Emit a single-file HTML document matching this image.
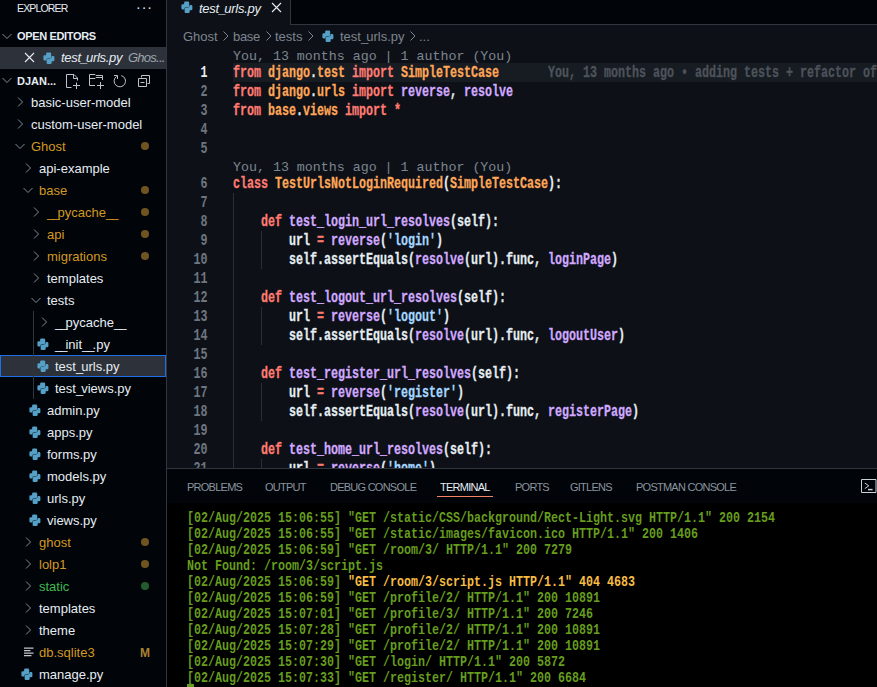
<!DOCTYPE html><html><head><meta charset="utf-8"><style>
*{margin:0;padding:0;box-sizing:border-box}
html,body{width:877px;height:687px;overflow:hidden;background:#010409}
body{position:relative;font-family:"Liberation Sans",sans-serif;font-size:13px}
.t{position:absolute;white-space:pre;line-height:16px}
.b{font-weight:bold}
.u{letter-spacing:-2px}
.i{font-style:italic}
.ic{position:absolute;display:block}
#sb{position:absolute;left:0;top:0;width:166px;height:687px;background:#010409;overflow:hidden}
.sel0{position:absolute;left:0;width:166px;height:22px;background:#2d323a}
.sel1{position:absolute;left:0;width:166px;height:22px;background:#2d323a;border:1px solid #1f6feb}
.dot{position:absolute;left:141px;width:8px;height:8px;border-radius:50%}
#ed{position:absolute;left:167px;top:0;width:710px;height:468px;background:#0d1117;overflow:hidden}
#tabs{position:absolute;left:0;top:0;width:710px;height:25px;background:#010409;border-bottom:1px solid #30363d}
#tab{position:absolute;left:0;top:0;width:124px;height:25px;background:#0d1117;border-right:1px solid #30363d}
#code{position:absolute;left:0;top:0;width:710px;height:468px}
.ln{position:absolute;left:0;width:40.5px;text-align:right;font-family:"Liberation Mono",monospace;font-weight:bold;font-size:16px;line-height:19px;transform:scaleX(0.7292);transform-origin:40.5px 0}
.cl{position:absolute;white-space:pre;-webkit-text-stroke:0.3px currentColor;font-family:"Liberation Mono",monospace;font-weight:bold;font-size:16px;line-height:19px;transform:scaleX(0.7292);transform-origin:0 0;color:#e6edf3}
.lens{position:absolute;white-space:pre;font-family:"Liberation Mono",monospace;font-size:13.3px;line-height:16px;color:#7d8590}
.guide{position:absolute;width:1px;background:#2a2f36}
#panel{position:absolute;left:167px;top:468px;width:710px;height:219px;background:#010409}
.ptab{font-size:11px;letter-spacing:-0.75px}
#term{position:absolute;left:0;top:35px;width:710px;height:184px;background:#000}
.tl{position:absolute;white-space:pre;font-family:"Liberation Mono",monospace;font-weight:bold;font-size:15px;line-height:16px;transform:scaleX(0.7778);transform-origin:0 0}
</style></head><body><div id="sb">
<div class="t" style="left:17px;top:0px;font-size:10.5px;letter-spacing:-0.85px;color:#e6edf3">EXPLORER</div>
<div class="t" style="left:136px;top:-1px;font-size:14px;color:#e6edf3;letter-spacing:1px">···</div>
<svg class="ic" style="left:1px;top:31px;width:12px;height:10px" viewBox="0 0 12 10"><path d="M1.5 3l4.5 4.5 4.5-4.5" fill="none" stroke="#848d97" stroke-width="1"/></svg>
<div class="t b" style="left:17px;top:28px;font-size:11px;color:#e6edf3;letter-spacing:-0.35px">OPEN EDITORS</div>
<div class="sel0" style="top:47px"></div>
<svg class="ic" style="left:24px;top:52px;width:11px;height:11px" viewBox="0 0 11 11"><path d="M1 1l9 9M10 1l-9 9" stroke="#e6edf3" stroke-width="1.1"/></svg>
<svg class="ic" style="left:44px;top:52px;width:11px;height:12px;overflow:visible" viewBox="0.6 -0.5 11 12"><g fill="#55a0c6"><path d="M2.7 1.3Q2.7 0 4 0H6.5Q7.8 0 7.8 1.3V5.2L3.9 6Q2.8 6.2 2.8 7.2V8.1H1.3Q0 8.1 0 6.8V4Q0 2.7 1.3 2.7H2.7Z"/><path d="M8.3 10.2Q8.3 11.5 7 11.5H4.5Q3.2 11.5 3.2 10.2V6.6L7.1 5.8Q8.2 5.6 8.2 4.6V3.4H9.7Q11 3.4 11 4.7V7.5Q11 8.8 9.7 8.8H8.3Z"/></g></svg>
<div class="t i" style="left:61px;top:50px;color:#e6edf3;letter-spacing:-0.3px">test<span class="u">_</span>urls.py</div>
<div class="t i" style="left:128px;top:50px;color:#9da5ae;letter-spacing:-0.75px">Ghos...</div>
<svg class="ic" style="left:1px;top:75px;width:12px;height:10px" viewBox="0 0 12 10"><path d="M1.5 3l4.5 4.5 4.5-4.5" fill="none" stroke="#848d97" stroke-width="1"/></svg>
<div class="t b" style="left:17px;top:73px;font-size:11px;color:#e6edf3">DJAN...</div>
<svg class="ic" style="left:64px;top:72px;width:18px;height:18px" viewBox="0 0 18 18" fill="none" stroke="#bcc4cc" stroke-width="1"><path d="M2.5 2.5V15.5H7.5M2.5 2.5H10L13.5 6V8.5M9.5 2.5V6.5H13.5M12.5 10.5V17M9 13.5H16"/></svg>
<svg class="ic" style="left:88px;top:72px;width:18px;height:18px" viewBox="0 0 18 18" fill="none" stroke="#bcc4cc" stroke-width="1"><path d="M1.5 2.5V13.5H7M1.5 2.5H7L8 3.5H14.5V8M1.5 6.5H7L8 5.5H14.5M12.5 10V17M9 13.5H16"/></svg>
<svg class="ic" style="left:112px;top:73px;width:16px;height:16px" viewBox="0 0 16 16" fill="none" stroke="#bcc4cc" stroke-width="1"><path d="M9.3 2.6A5.7 5.7 0 1 1 4.6 3.4M2 2.5H5.5V6"/></svg>
<svg class="ic" style="left:136px;top:73px;width:16px;height:16px" viewBox="0 0 16 16" fill="none" stroke="#bcc4cc" stroke-width="1"><path d="M5.5 4.5v-2h8v8h-2M2.5 5.5h8v8h-8zM4.5 9.5h4"/></svg>
<svg class="ic" style="left:15px;top:96px;width:10px;height:12px" viewBox="0 0 10 12"><path d="M3 1.5l4.5 4.5-4.5 4.5" fill="none" stroke="#848d97" stroke-width="1"/></svg>
<div class="t" style="left:31px;top:95px;color:#e6edf3">basic-user-model</div>
<svg class="ic" style="left:15px;top:118px;width:10px;height:12px" viewBox="0 0 10 12"><path d="M3 1.5l4.5 4.5-4.5 4.5" fill="none" stroke="#848d97" stroke-width="1"/></svg>
<div class="t" style="left:31px;top:117px;color:#e6edf3">custom-user-model</div>
<svg class="ic" style="left:14px;top:141px;width:12px;height:10px" viewBox="0 0 12 10"><path d="M1.5 3l4.5 4.5 4.5-4.5" fill="none" stroke="#848d97" stroke-width="1"/></svg>
<div class="t" style="left:31px;top:139px;color:#d29922">Ghost</div>
<div class="dot" style="top:142px;background:#6f5420"></div>
<svg class="ic" style="left:23px;top:162px;width:10px;height:12px" viewBox="0 0 10 12"><path d="M3 1.5l4.5 4.5-4.5 4.5" fill="none" stroke="#848d97" stroke-width="1"/></svg>
<div class="t" style="left:39px;top:161px;color:#e6edf3">api-example</div>
<svg class="ic" style="left:22px;top:185px;width:12px;height:10px" viewBox="0 0 12 10"><path d="M1.5 3l4.5 4.5 4.5-4.5" fill="none" stroke="#848d97" stroke-width="1"/></svg>
<div class="t" style="left:39px;top:183px;color:#d29922">base</div>
<div class="dot" style="top:186px;background:#6f5420"></div>
<svg class="ic" style="left:31px;top:206px;width:10px;height:12px" viewBox="0 0 10 12"><path d="M3 1.5l4.5 4.5-4.5 4.5" fill="none" stroke="#848d97" stroke-width="1"/></svg>
<div class="t" style="left:47px;top:205px;color:#d29922"><span class="u">_</span><span class="u">_</span>pycache<span class="u">_</span><span class="u">_</span></div>
<div class="dot" style="top:208px;background:#6f5420"></div>
<svg class="ic" style="left:31px;top:228px;width:10px;height:12px" viewBox="0 0 10 12"><path d="M3 1.5l4.5 4.5-4.5 4.5" fill="none" stroke="#848d97" stroke-width="1"/></svg>
<div class="t" style="left:47px;top:227px;color:#d29922">api</div>
<div class="dot" style="top:230px;background:#6f5420"></div>
<svg class="ic" style="left:31px;top:250px;width:10px;height:12px" viewBox="0 0 10 12"><path d="M3 1.5l4.5 4.5-4.5 4.5" fill="none" stroke="#848d97" stroke-width="1"/></svg>
<div class="t" style="left:47px;top:249px;color:#d29922">migrations</div>
<div class="dot" style="top:252px;background:#6f5420"></div>
<svg class="ic" style="left:31px;top:272px;width:10px;height:12px" viewBox="0 0 10 12"><path d="M3 1.5l4.5 4.5-4.5 4.5" fill="none" stroke="#848d97" stroke-width="1"/></svg>
<div class="t" style="left:47px;top:271px;color:#e6edf3">templates</div>
<svg class="ic" style="left:30px;top:295px;width:12px;height:10px" viewBox="0 0 12 10"><path d="M1.5 3l4.5 4.5 4.5-4.5" fill="none" stroke="#848d97" stroke-width="1"/></svg>
<div class="t" style="left:47px;top:293px;color:#e6edf3">tests</div>
<svg class="ic" style="left:39px;top:316px;width:10px;height:12px" viewBox="0 0 10 12"><path d="M3 1.5l4.5 4.5-4.5 4.5" fill="none" stroke="#848d97" stroke-width="1"/></svg>
<div class="t" style="left:55px;top:315px;color:#e6edf3"><span class="u">_</span><span class="u">_</span>pycache<span class="u">_</span><span class="u">_</span></div>
<svg class="ic" style="left:38px;top:338px;width:11px;height:12px;overflow:visible" viewBox="0.6 -0.5 11 12"><g fill="#55a0c6"><path d="M2.7 1.3Q2.7 0 4 0H6.5Q7.8 0 7.8 1.3V5.2L3.9 6Q2.8 6.2 2.8 7.2V8.1H1.3Q0 8.1 0 6.8V4Q0 2.7 1.3 2.7H2.7Z"/><path d="M8.3 10.2Q8.3 11.5 7 11.5H4.5Q3.2 11.5 3.2 10.2V6.6L7.1 5.8Q8.2 5.6 8.2 4.6V3.4H9.7Q11 3.4 11 4.7V7.5Q11 8.8 9.7 8.8H8.3Z"/></g></svg>
<div class="t" style="left:55px;top:337px;color:#e6edf3"><span class="u">_</span><span class="u">_</span>init<span class="u">_</span><span class="u">_</span>.py</div>
<div class="sel1" style="top:355px"></div>
<svg class="ic" style="left:38px;top:360px;width:11px;height:12px;overflow:visible" viewBox="0.6 -0.5 11 12"><g fill="#55a0c6"><path d="M2.7 1.3Q2.7 0 4 0H6.5Q7.8 0 7.8 1.3V5.2L3.9 6Q2.8 6.2 2.8 7.2V8.1H1.3Q0 8.1 0 6.8V4Q0 2.7 1.3 2.7H2.7Z"/><path d="M8.3 10.2Q8.3 11.5 7 11.5H4.5Q3.2 11.5 3.2 10.2V6.6L7.1 5.8Q8.2 5.6 8.2 4.6V3.4H9.7Q11 3.4 11 4.7V7.5Q11 8.8 9.7 8.8H8.3Z"/></g></svg>
<div class="t" style="left:55px;top:359px;color:#e6edf3">test<span class="u">_</span>urls.py</div>
<svg class="ic" style="left:38px;top:382px;width:11px;height:12px;overflow:visible" viewBox="0.6 -0.5 11 12"><g fill="#55a0c6"><path d="M2.7 1.3Q2.7 0 4 0H6.5Q7.8 0 7.8 1.3V5.2L3.9 6Q2.8 6.2 2.8 7.2V8.1H1.3Q0 8.1 0 6.8V4Q0 2.7 1.3 2.7H2.7Z"/><path d="M8.3 10.2Q8.3 11.5 7 11.5H4.5Q3.2 11.5 3.2 10.2V6.6L7.1 5.8Q8.2 5.6 8.2 4.6V3.4H9.7Q11 3.4 11 4.7V7.5Q11 8.8 9.7 8.8H8.3Z"/></g></svg>
<div class="t" style="left:55px;top:381px;color:#e6edf3">test<span class="u">_</span>views.py</div>
<svg class="ic" style="left:30px;top:404px;width:11px;height:12px;overflow:visible" viewBox="0.6 -0.5 11 12"><g fill="#55a0c6"><path d="M2.7 1.3Q2.7 0 4 0H6.5Q7.8 0 7.8 1.3V5.2L3.9 6Q2.8 6.2 2.8 7.2V8.1H1.3Q0 8.1 0 6.8V4Q0 2.7 1.3 2.7H2.7Z"/><path d="M8.3 10.2Q8.3 11.5 7 11.5H4.5Q3.2 11.5 3.2 10.2V6.6L7.1 5.8Q8.2 5.6 8.2 4.6V3.4H9.7Q11 3.4 11 4.7V7.5Q11 8.8 9.7 8.8H8.3Z"/></g></svg>
<div class="t" style="left:47px;top:403px;color:#e6edf3">admin.py</div>
<svg class="ic" style="left:30px;top:426px;width:11px;height:12px;overflow:visible" viewBox="0.6 -0.5 11 12"><g fill="#55a0c6"><path d="M2.7 1.3Q2.7 0 4 0H6.5Q7.8 0 7.8 1.3V5.2L3.9 6Q2.8 6.2 2.8 7.2V8.1H1.3Q0 8.1 0 6.8V4Q0 2.7 1.3 2.7H2.7Z"/><path d="M8.3 10.2Q8.3 11.5 7 11.5H4.5Q3.2 11.5 3.2 10.2V6.6L7.1 5.8Q8.2 5.6 8.2 4.6V3.4H9.7Q11 3.4 11 4.7V7.5Q11 8.8 9.7 8.8H8.3Z"/></g></svg>
<div class="t" style="left:47px;top:425px;color:#e6edf3">apps.py</div>
<svg class="ic" style="left:30px;top:448px;width:11px;height:12px;overflow:visible" viewBox="0.6 -0.5 11 12"><g fill="#55a0c6"><path d="M2.7 1.3Q2.7 0 4 0H6.5Q7.8 0 7.8 1.3V5.2L3.9 6Q2.8 6.2 2.8 7.2V8.1H1.3Q0 8.1 0 6.8V4Q0 2.7 1.3 2.7H2.7Z"/><path d="M8.3 10.2Q8.3 11.5 7 11.5H4.5Q3.2 11.5 3.2 10.2V6.6L7.1 5.8Q8.2 5.6 8.2 4.6V3.4H9.7Q11 3.4 11 4.7V7.5Q11 8.8 9.7 8.8H8.3Z"/></g></svg>
<div class="t" style="left:47px;top:447px;color:#e6edf3">forms.py</div>
<svg class="ic" style="left:30px;top:470px;width:11px;height:12px;overflow:visible" viewBox="0.6 -0.5 11 12"><g fill="#55a0c6"><path d="M2.7 1.3Q2.7 0 4 0H6.5Q7.8 0 7.8 1.3V5.2L3.9 6Q2.8 6.2 2.8 7.2V8.1H1.3Q0 8.1 0 6.8V4Q0 2.7 1.3 2.7H2.7Z"/><path d="M8.3 10.2Q8.3 11.5 7 11.5H4.5Q3.2 11.5 3.2 10.2V6.6L7.1 5.8Q8.2 5.6 8.2 4.6V3.4H9.7Q11 3.4 11 4.7V7.5Q11 8.8 9.7 8.8H8.3Z"/></g></svg>
<div class="t" style="left:47px;top:469px;color:#e6edf3">models.py</div>
<svg class="ic" style="left:30px;top:492px;width:11px;height:12px;overflow:visible" viewBox="0.6 -0.5 11 12"><g fill="#55a0c6"><path d="M2.7 1.3Q2.7 0 4 0H6.5Q7.8 0 7.8 1.3V5.2L3.9 6Q2.8 6.2 2.8 7.2V8.1H1.3Q0 8.1 0 6.8V4Q0 2.7 1.3 2.7H2.7Z"/><path d="M8.3 10.2Q8.3 11.5 7 11.5H4.5Q3.2 11.5 3.2 10.2V6.6L7.1 5.8Q8.2 5.6 8.2 4.6V3.4H9.7Q11 3.4 11 4.7V7.5Q11 8.8 9.7 8.8H8.3Z"/></g></svg>
<div class="t" style="left:47px;top:491px;color:#e6edf3">urls.py</div>
<svg class="ic" style="left:30px;top:514px;width:11px;height:12px;overflow:visible" viewBox="0.6 -0.5 11 12"><g fill="#55a0c6"><path d="M2.7 1.3Q2.7 0 4 0H6.5Q7.8 0 7.8 1.3V5.2L3.9 6Q2.8 6.2 2.8 7.2V8.1H1.3Q0 8.1 0 6.8V4Q0 2.7 1.3 2.7H2.7Z"/><path d="M8.3 10.2Q8.3 11.5 7 11.5H4.5Q3.2 11.5 3.2 10.2V6.6L7.1 5.8Q8.2 5.6 8.2 4.6V3.4H9.7Q11 3.4 11 4.7V7.5Q11 8.8 9.7 8.8H8.3Z"/></g></svg>
<div class="t" style="left:47px;top:513px;color:#e6edf3">views.py</div>
<svg class="ic" style="left:23px;top:536px;width:10px;height:12px" viewBox="0 0 10 12"><path d="M3 1.5l4.5 4.5-4.5 4.5" fill="none" stroke="#848d97" stroke-width="1"/></svg>
<div class="t" style="left:39px;top:535px;color:#d29922">ghost</div>
<div class="dot" style="top:538px;background:#6f5420"></div>
<svg class="ic" style="left:23px;top:558px;width:10px;height:12px" viewBox="0 0 10 12"><path d="M3 1.5l4.5 4.5-4.5 4.5" fill="none" stroke="#848d97" stroke-width="1"/></svg>
<div class="t" style="left:39px;top:557px;color:#d29922">lolp1</div>
<div class="dot" style="top:560px;background:#6f5420"></div>
<svg class="ic" style="left:23px;top:580px;width:10px;height:12px" viewBox="0 0 10 12"><path d="M3 1.5l4.5 4.5-4.5 4.5" fill="none" stroke="#848d97" stroke-width="1"/></svg>
<div class="t" style="left:39px;top:579px;color:#3fb950">static</div>
<div class="dot" style="top:582px;background:#235c2e"></div>
<svg class="ic" style="left:23px;top:602px;width:10px;height:12px" viewBox="0 0 10 12"><path d="M3 1.5l4.5 4.5-4.5 4.5" fill="none" stroke="#848d97" stroke-width="1"/></svg>
<div class="t" style="left:39px;top:601px;color:#e6edf3">templates</div>
<svg class="ic" style="left:23px;top:624px;width:10px;height:12px" viewBox="0 0 10 12"><path d="M3 1.5l4.5 4.5-4.5 4.5" fill="none" stroke="#848d97" stroke-width="1"/></svg>
<div class="t" style="left:39px;top:623px;color:#e6edf3">theme</div>
<svg class="ic" style="left:24px;top:647px;width:10px;height:10px" viewBox="0 0 10 10" fill="none" stroke="#c0c6cc" stroke-width="1.3"><path d="M0 1.2h9.5M0 3.7h6.5M0 6.2h9.5M0 8.7h7.5"/></svg>
<div class="t" style="left:39px;top:645px;color:#d29922">db.sqlite3</div>
<div class="t b" style="left:140px;top:645px;font-size:12px;color:#a98232">M</div>
<svg class="ic" style="left:22px;top:668px;width:11px;height:12px;overflow:visible" viewBox="0.6 -0.5 11 12"><g fill="#55a0c6"><path d="M2.7 1.3Q2.7 0 4 0H6.5Q7.8 0 7.8 1.3V5.2L3.9 6Q2.8 6.2 2.8 7.2V8.1H1.3Q0 8.1 0 6.8V4Q0 2.7 1.3 2.7H2.7Z"/><path d="M8.3 10.2Q8.3 11.5 7 11.5H4.5Q3.2 11.5 3.2 10.2V6.6L7.1 5.8Q8.2 5.6 8.2 4.6V3.4H9.7Q11 3.4 11 4.7V7.5Q11 8.8 9.7 8.8H8.3Z"/></g></svg>
<div class="t" style="left:39px;top:667px;color:#e6edf3">manage.py</div>
<div style="position:absolute;left:33px;top:311px;width:1px;height:88px;background:#31363d"></div>
</div>
<div style="position:absolute;left:166px;top:0;width:1px;height:687px;background:#30363d"></div>
<div id="ed">
<div id="tabs"></div>
<div id="tab"></div>
<svg class="ic" style="left:15px;top:1px;width:11px;height:12px;overflow:visible" viewBox="0.6 -0.5 11 12"><g fill="#55a0c6"><path d="M2.7 1.3Q2.7 0 4 0H6.5Q7.8 0 7.8 1.3V5.2L3.9 6Q2.8 6.2 2.8 7.2V8.1H1.3Q0 8.1 0 6.8V4Q0 2.7 1.3 2.7H2.7Z"/><path d="M8.3 10.2Q8.3 11.5 7 11.5H4.5Q3.2 11.5 3.2 10.2V6.6L7.1 5.8Q8.2 5.6 8.2 4.6V3.4H9.7Q11 3.4 11 4.7V7.5Q11 8.8 9.7 8.8H8.3Z"/></g></svg>
<div class="t i" style="left:32px;top:1px;color:#e6edf3;letter-spacing:-0.25px">test<span class="u">_</span>urls.py</div>
<svg class="ic" style="left:104px;top:2px;width:11px;height:11px" viewBox="0 0 11 11"><path d="M1 1l9 9M10 1l-9 9" stroke="#e6edf3" stroke-width="1.1"/></svg>
<div class="t" style="left:16px;top:29px;color:#7d8590">Ghost</div>
<svg class="ic" style="left:55px;top:30px;width:8px;height:12px" viewBox="0 0 8 12"><path d="M1.5 1.5l4.5 4.5-4.5 4.5" fill="none" stroke="#7d8590" stroke-width="1"/></svg>
<div class="t" style="left:66px;top:29px;color:#7d8590;letter-spacing:-0.3px">base</div>
<svg class="ic" style="left:98px;top:30px;width:8px;height:12px" viewBox="0 0 8 12"><path d="M1.5 1.5l4.5 4.5-4.5 4.5" fill="none" stroke="#7d8590" stroke-width="1"/></svg>
<div class="t" style="left:108px;top:29px;color:#7d8590">tests</div>
<svg class="ic" style="left:140px;top:30px;width:8px;height:12px" viewBox="0 0 8 12"><path d="M1.5 1.5l4.5 4.5-4.5 4.5" fill="none" stroke="#7d8590" stroke-width="1"/></svg>
<svg class="ic" style="left:156px;top:30px;width:11px;height:12px;overflow:visible" viewBox="0.6 -0.5 11 12"><g fill="#55a0c6"><path d="M2.7 1.3Q2.7 0 4 0H6.5Q7.8 0 7.8 1.3V5.2L3.9 6Q2.8 6.2 2.8 7.2V8.1H1.3Q0 8.1 0 6.8V4Q0 2.7 1.3 2.7H2.7Z"/><path d="M8.3 10.2Q8.3 11.5 7 11.5H4.5Q3.2 11.5 3.2 10.2V6.6L7.1 5.8Q8.2 5.6 8.2 4.6V3.4H9.7Q11 3.4 11 4.7V7.5Q11 8.8 9.7 8.8H8.3Z"/></g></svg>
<div class="t" style="left:173px;top:29px;color:#7d8590">test<span class="u">_</span>urls.py</div>
<svg class="ic" style="left:242px;top:30px;width:8px;height:12px" viewBox="0 0 8 12"><path d="M1.5 1.5l4.5 4.5-4.5 4.5" fill="none" stroke="#7d8590" stroke-width="1"/></svg>
<div class="t" style="left:252px;top:29px;color:#7d8590">...</div>
<div id="code">
<div style="position:absolute;left:66px;top:63px;width:644px;height:19px;background:#171b22"></div>
<div class="lens" style="left:66px;top:49px">You, 13 months ago | 1 author (You)</div>
<div class="lens" style="left:66px;top:160px">You, 13 months ago | 1 author (You)</div>
<div class="guide" style="left:66px;top:193px;height:275px"></div>
<div class="guide" style="left:94px;top:231px;height:38px"></div>
<div class="guide" style="left:94px;top:307px;height:38px"></div>
<div class="guide" style="left:94px;top:383px;height:38px"></div>
<div class="guide" style="left:94px;top:459px;height:38px"></div>
<div class="ln" style="top:64px;color:#e6edf3">1</div>
<div class="cl" style="left:66px;top:64px"><span style="color:#ff7b72">from</span><span style="color:#e6edf3"> </span><span style="color:#ffa657">django</span><span style="color:#e6edf3">.</span><span style="color:#ffa657">test</span><span style="color:#e6edf3"> </span><span style="color:#ff7b72">import</span><span style="color:#e6edf3"> </span><span style="color:#ffa657">SimpleTestCase</span></div>
<div class="ln" style="top:83px;color:#6e7681">2</div>
<div class="cl" style="left:66px;top:83px"><span style="color:#ff7b72">from</span><span style="color:#e6edf3"> </span><span style="color:#ffa657">django</span><span style="color:#e6edf3">.</span><span style="color:#ffa657">urls</span><span style="color:#e6edf3"> </span><span style="color:#ff7b72">import</span><span style="color:#e6edf3"> </span><span style="color:#d2a8ff">reverse</span><span style="color:#e6edf3">, </span><span style="color:#d2a8ff">resolve</span></div>
<div class="ln" style="top:102px;color:#6e7681">3</div>
<div class="cl" style="left:66px;top:102px"><span style="color:#ff7b72">from</span><span style="color:#e6edf3"> </span><span style="color:#ffa657">base</span><span style="color:#e6edf3">.</span><span style="color:#ffa657">views</span><span style="color:#e6edf3"> </span><span style="color:#ff7b72">import</span><span style="color:#e6edf3"> </span><span style="color:#ff7b72">*</span></div>
<div class="ln" style="top:121px;color:#6e7681">4</div>
<div class="ln" style="top:140px;color:#6e7681">5</div>
<div class="ln" style="top:175px;color:#6e7681">6</div>
<div class="cl" style="left:66px;top:175px"><span style="color:#ff7b72">class</span><span style="color:#e6edf3"> </span><span style="color:#ffa657">TestUrlsNotLoginRequired</span><span style="color:#e6edf3">(</span><span style="color:#ffa657">SimpleTestCase</span><span style="color:#e6edf3">):</span></div>
<div class="ln" style="top:194px;color:#6e7681">7</div>
<div class="ln" style="top:213px;color:#6e7681">8</div>
<div class="cl" style="left:66px;top:213px"><span style="color:#e6edf3">    </span><span style="color:#ff7b72">def</span><span style="color:#e6edf3"> </span><span style="color:#d2a8ff">test_login_url_resolves</span><span style="color:#e6edf3">(self):</span></div>
<div class="ln" style="top:232px;color:#6e7681">9</div>
<div class="cl" style="left:66px;top:232px"><span style="color:#e6edf3">        url </span><span style="color:#ff7b72">=</span><span style="color:#e6edf3"> </span><span style="color:#d2a8ff">reverse</span><span style="color:#e6edf3">(</span><span style="color:#a5d6ff">&#x27;login&#x27;</span><span style="color:#e6edf3">)</span></div>
<div class="ln" style="top:251px;color:#6e7681">10</div>
<div class="cl" style="left:66px;top:251px"><span style="color:#e6edf3">        self.assertEquals(</span><span style="color:#d2a8ff">resolve</span><span style="color:#e6edf3">(url).func, </span><span style="color:#d2a8ff">loginPage</span><span style="color:#e6edf3">)</span></div>
<div class="ln" style="top:270px;color:#6e7681">11</div>
<div class="ln" style="top:289px;color:#6e7681">12</div>
<div class="cl" style="left:66px;top:289px"><span style="color:#e6edf3">    </span><span style="color:#ff7b72">def</span><span style="color:#e6edf3"> </span><span style="color:#d2a8ff">test_logout_url_resolves</span><span style="color:#e6edf3">(self):</span></div>
<div class="ln" style="top:308px;color:#6e7681">13</div>
<div class="cl" style="left:66px;top:308px"><span style="color:#e6edf3">        url </span><span style="color:#ff7b72">=</span><span style="color:#e6edf3"> </span><span style="color:#d2a8ff">reverse</span><span style="color:#e6edf3">(</span><span style="color:#a5d6ff">&#x27;logout&#x27;</span><span style="color:#e6edf3">)</span></div>
<div class="ln" style="top:327px;color:#6e7681">14</div>
<div class="cl" style="left:66px;top:327px"><span style="color:#e6edf3">        self.assertEquals(</span><span style="color:#d2a8ff">resolve</span><span style="color:#e6edf3">(url).func, </span><span style="color:#d2a8ff">logoutUser</span><span style="color:#e6edf3">)</span></div>
<div class="ln" style="top:346px;color:#6e7681">15</div>
<div class="ln" style="top:365px;color:#6e7681">16</div>
<div class="cl" style="left:66px;top:365px"><span style="color:#e6edf3">    </span><span style="color:#ff7b72">def</span><span style="color:#e6edf3"> </span><span style="color:#d2a8ff">test_register_url_resolves</span><span style="color:#e6edf3">(self):</span></div>
<div class="ln" style="top:384px;color:#6e7681">17</div>
<div class="cl" style="left:66px;top:384px"><span style="color:#e6edf3">        url </span><span style="color:#ff7b72">=</span><span style="color:#e6edf3"> </span><span style="color:#d2a8ff">reverse</span><span style="color:#e6edf3">(</span><span style="color:#a5d6ff">&#x27;register&#x27;</span><span style="color:#e6edf3">)</span></div>
<div class="ln" style="top:403px;color:#6e7681">18</div>
<div class="cl" style="left:66px;top:403px"><span style="color:#e6edf3">        self.assertEquals(</span><span style="color:#d2a8ff">resolve</span><span style="color:#e6edf3">(url).func, </span><span style="color:#d2a8ff">registerPage</span><span style="color:#e6edf3">)</span></div>
<div class="ln" style="top:422px;color:#6e7681">19</div>
<div class="ln" style="top:441px;color:#6e7681">20</div>
<div class="cl" style="left:66px;top:441px"><span style="color:#e6edf3">    </span><span style="color:#ff7b72">def</span><span style="color:#e6edf3"> </span><span style="color:#d2a8ff">test_home_url_resolves</span><span style="color:#e6edf3">(self):</span></div>
<div class="ln" style="top:460px;color:#6e7681">21</div>
<div class="cl" style="left:66px;top:460px"><span style="color:#e6edf3">        url </span><span style="color:#ff7b72">=</span><span style="color:#e6edf3"> </span><span style="color:#d2a8ff">reverse</span><span style="color:#e6edf3">(</span><span style="color:#a5d6ff">&#x27;home&#x27;</span><span style="color:#e6edf3">)</span></div>
<div class="cl" style="left:381px;top:64px;color:#4d535b">You, 13 months ago • adding tests + refactor of the code</div>
</div>
</div>
<div id="panel">
<div style="position:absolute;left:0;top:0;width:710px;height:1px;background:#30363d"></div>
<div class="t ptab" style="left:20px;top:11px;color:#8b949e">PROBLEMS</div>
<div class="t ptab" style="left:98px;top:11px;color:#8b949e">OUTPUT</div>
<div class="t ptab" style="left:163px;top:11px;color:#8b949e">DEBUG CONSOLE</div>
<div class="t ptab" style="left:273px;top:11px;color:#e6edf3">TERMINAL</div>
<div class="t ptab" style="left:348px;top:11px;color:#8b949e">PORTS</div>
<div class="t ptab" style="left:403px;top:11px;color:#8b949e">GITLENS</div>
<div class="t ptab" style="left:469px;top:11px;color:#8b949e">POSTMAN CONSOLE</div>
<div style="position:absolute;left:270px;top:28px;width:56px;height:1px;background:#f78166"></div>
<svg class="ic" style="left:693px;top:10px;width:17px;height:16px" viewBox="0 0 17 16" fill="none" stroke="#c9d1d9" stroke-width="1"><path d="M1.5 1.5h14.5v13H1.5z M4.8 5l4 2.8-4 2.8"/><path d="M8 11.6h4.6" stroke-width="1.5"/></svg>
<div id="term">
<div class="tl" style="left:20px;top:8px"><span style="color:#669d1e">[02/Aug/2025 15:06:55] &quot;GET /static/CSS/background/Rect-Light.svg HTTP/1.1&quot; 200 2154</span></div>
<div class="tl" style="left:20px;top:24px"><span style="color:#669d1e">[02/Aug/2025 15:06:55] &quot;GET /static/images/favicon.ico HTTP/1.1&quot; 200 1406</span></div>
<div class="tl" style="left:20px;top:40px"><span style="color:#669d1e">[02/Aug/2025 15:06:59] &quot;GET /room/3/ HTTP/1.1&quot; 200 7279</span></div>
<div class="tl" style="left:20px;top:56px"><span style="color:#669d1e">Not Found: /room/3/script.js</span></div>
<div class="tl" style="left:20px;top:72px"><span style="color:#669d1e">[02/Aug/2025 15:06:59] </span><span style="color:#f6bc44">&quot;GET /room/3/script.js HTTP/1.1&quot; 404 4683</span></div>
<div class="tl" style="left:20px;top:88px"><span style="color:#669d1e">[02/Aug/2025 15:06:59] &quot;GET /profile/2/ HTTP/1.1&quot; 200 10891</span></div>
<div class="tl" style="left:20px;top:104px"><span style="color:#669d1e">[02/Aug/2025 15:07:01] &quot;GET /profile/3/ HTTP/1.1&quot; 200 7246</span></div>
<div class="tl" style="left:20px;top:120px"><span style="color:#669d1e">[02/Aug/2025 15:07:28] &quot;GET /profile/2/ HTTP/1.1&quot; 200 10891</span></div>
<div class="tl" style="left:20px;top:136px"><span style="color:#669d1e">[02/Aug/2025 15:07:29] &quot;GET /profile/2/ HTTP/1.1&quot; 200 10891</span></div>
<div class="tl" style="left:20px;top:152px"><span style="color:#669d1e">[02/Aug/2025 15:07:30] &quot;GET /login/ HTTP/1.1&quot; 200 5872</span></div>
<div class="tl" style="left:20px;top:168px"><span style="color:#669d1e">[02/Aug/2025 15:07:33] &quot;GET /register/ HTTP/1.1&quot; 200 6684</span></div>
<div style="position:absolute;left:20px;top:181px;width:7px;height:3px;background:#669d1e"></div>
</div></div></body></html>
